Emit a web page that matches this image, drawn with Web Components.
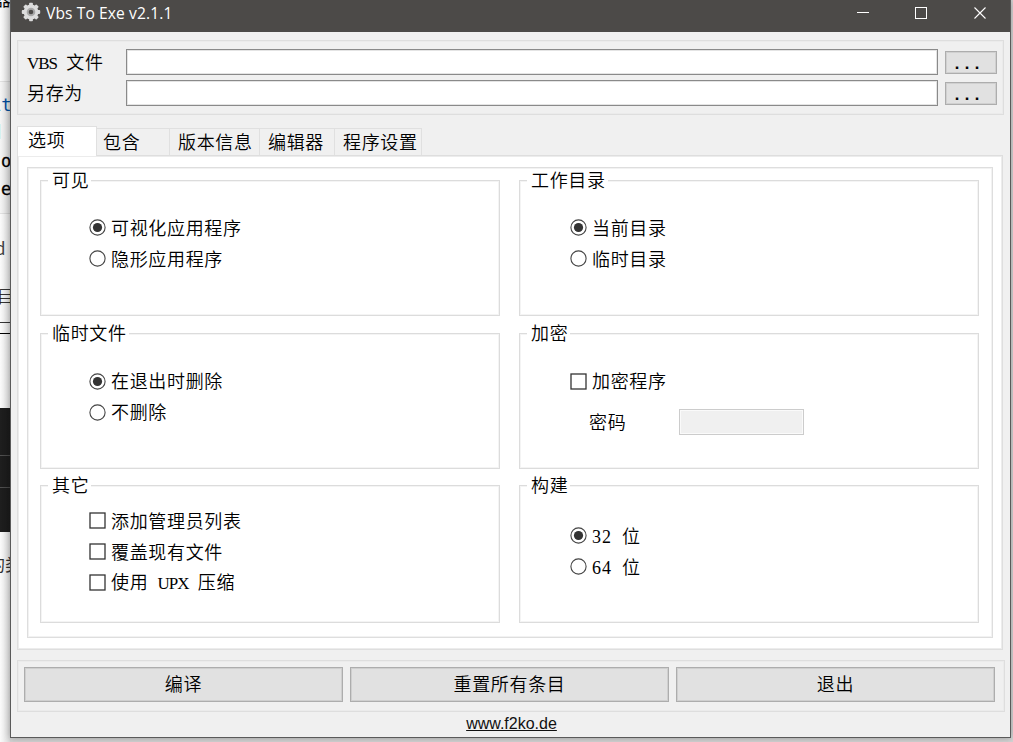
<!DOCTYPE html>
<html lang="zh-CN">
<head>
    <meta charset="UTF-8">
    <meta name="viewport" content="width=device-width, initial-scale=1.0">
    <title>Vbs To Exe v2.1.1</title>
    <style>
        html, body {
            margin: 0;
            height: 100%;
            overflow: hidden;
        }

        body {
            position: relative;
            width: 1013px;
            height: 742px;
            background: #fff;
            color: #000;
            font: 350 18px/24px "Noto Sans CJK SC", sans-serif;
            letter-spacing: 0.67px;
        }

        app-window {
            margin-left: 10px;
        }

        .lat {
            font: 17px/20px "Liberation Serif", serif;
            letter-spacing: -1px;
            word-spacing: 6px;
            white-space: pre;
        }

        .num {
            font: 18px/20px "Liberation Serif", serif;
            letter-spacing: 1px;
            word-spacing: 4.5px;
            white-space: pre;
        }
    </style>
</head>
<body>
    <desk-backdrop></desk-backdrop>
    <app-window caption="Vbs To Exe v2.1.1">
        <file-panel>
            <file-row><span class="lat">VBS </span>文件</file-row>
            <file-row>另存为</file-row>
        </file-panel>
        <tab-strip>
            <tab-item active style="--w: 80px; --pad: 11px">选项</tab-item>
            <tab-item style="--w: 73px; --pad: 6px">包含</tab-item>
            <tab-item style="--w: 90px; --pad: 8px">版本信息</tab-item>
            <tab-item style="--w: 75px; --pad: 8px">编辑器</tab-item>
            <tab-item style="--w: 87px; --pad: 8px">程序设置</tab-item>
        </tab-strip>
        <tab-page>
            <group-box caption="可见" style="--top: 23px">
                <option-item type="radio" checked>可视化应用程序</option-item>
                <option-item type="radio">隐形应用程序</option-item>
            </group-box>
            <group-box caption="工作目录" style="--top: 23px; --left: 50px">
                <option-item type="radio" checked>当前目录</option-item>
                <option-item type="radio">临时目录</option-item>
            </group-box>
            <group-box caption="临时文件" style="--top: 24px">
                <option-item type="radio" checked>在退出时删除</option-item>
                <option-item type="radio">不删除</option-item>
            </group-box>
            <group-box caption="加密" style="--top: 24px; --left: 50px">
                <option-item type="check">加密程序</option-item>
                <password-row>密码</password-row>
            </group-box>
            <group-box caption="其它" style="--top: 11px">
                <option-item type="check">添加管理员列表</option-item>
                <option-item type="check">覆盖现有文件</option-item>
                <option-item type="check">使用<span class="lat"> UPX </span>压缩</option-item>
            </group-box>
            <group-box caption="构建" style="--top: 26px; --left: 50px">
                <option-item type="radio" checked><span class="num">32 </span>位</option-item>
                <option-item type="radio"><span class="num">64 </span>位</option-item>
            </group-box>
        </tab-page>
        <button-bar>
            <push-button>编译</push-button>
            <push-button>重置所有条目</push-button>
            <push-button>退出</push-button>
        </button-bar>
        <site-link>www.f2ko.de</site-link>
    </app-window>

    <script>
        // Small helper: attach an open shadow root and fill it
        function define(name, html) {
            customElements.define(name, class extends HTMLElement {
                constructor() {
                    super();
                    const tpl = document.createElement('template');
                    tpl.innerHTML = html;
                    this.attachShadow({ mode: 'open' }).appendChild(tpl.content.cloneNode(true));
                }

                connectedCallback() {
                    const cap = this.shadowRoot.querySelector('.caption');
                    if (cap) cap.textContent = this.getAttribute('caption');
                }
            });
        }

        // Slice of the page that is visible behind the window
        define('desk-backdrop', `
            <style>
                :host {
                    position: absolute;
                    inset: 0;
                    z-index: -1;
                    overflow: hidden;
                    background: #d4d4d4;
                }
                .strip { position: absolute; left: 0; top: 0; width: 10px; height: 742px; background: #fbfbfb; overflow: hidden; }
                .code { position: absolute; top: 81px; width: 10px; height: 131px; background: #f5f5f5; border: solid #e2e2e2; border-width: 1px 0; }
                .dark { position: absolute; top: 408px; width: 10px; height: 124px; background: #1e1e1e; }
                .dark::before { content: ""; display: block; position: relative; top: 47px; height: 31px; border: solid #505050; border-width: 1px 0; }
                .mark { position: absolute; top: 124px; width: 1px; height: 15px; background: #d5f3f2; }
                .shade { position: absolute; inset: 0; background: linear-gradient(to right, transparent, rgba(0, 0, 0, .13)); }
                span { position: absolute; font: 17px/20px "Noto Sans CJK SC", sans-serif; letter-spacing: 0; white-space: nowrap; }
                .mono { font-family: "DejaVu Sans Mono", monospace; }
            </style>
            <div class="strip">
                <div class="code"></div>
                <div class="mark"></div>
                <div class="dark"></div>
                <span style="left: -6px; top: -11px">器</span>
                <span class="mono" style="left: -9px; top: 95px; color: #0451a5">it</span>
                <span class="mono" style="left: 1px; top: 151px; -webkit-text-stroke: .3px">o</span>
                <span class="mono" style="left: 1px; top: 179px; -webkit-text-stroke: .3px">e</span>
                <span style="left: -5px; top: 238px; color: #444">d</span>
                <span style="left: -3px; top: 286px; font-weight: 300">目</span>
                <span style="left: -4px; top: 317px; font-weight: 300">二</span>
                <span style="left: -12px; top: 554px; color: #333">的类</span>
                <div class="shade"></div>
            </div>
        `);

        define('app-window', `
            <style>
                :host {
                    display: flex;
                    flex-direction: column;
                    box-sizing: border-box;
                    width: 1001px;
                    height: 738px;
                    border: 1px solid #5a5a5a;
                    border-top: 0;
                    background: #f0f0f0;
                    box-shadow: 0 0 7px rgba(0, 0, 0, .3);
                }
                header {
                    display: flex;
                    align-items: flex-start;
                    flex: none;
                    height: 32px;
                    background: #4c4a48;
                    color: #fff;
                }
                .gear { margin: 2px 0 0 10px; }
                .caption { margin: 1px auto 0 5px; font: 15.6px/24px "Open Sans", sans-serif; letter-spacing: 0.1px; }
                .ctl { margin: 6px 1px 0 0; }
                main { display: flex; flex-direction: column; padding: 8px 6px 0 6px; }
            </style>
            <header>
                <svg class="gear" width="20" height="20" viewBox="-10 -10 20 20">
                    <g fill="#dcdcdc">
                        <circle r="7.4"/>
                        <g><rect x="-1.9" y="-9.2" width="3.8" height="18.4" rx=".8"/><rect x="-9.2" y="-1.9" width="18.4" height="3.8" rx=".8"/></g>
                        <g transform="rotate(45)"><rect x="-1.9" y="-9.2" width="3.8" height="18.4" rx=".8"/><rect x="-9.2" y="-1.9" width="18.4" height="3.8" rx=".8"/></g>
                    </g>
                    <circle r="4.3" fill="#a8a8a8"/>
                    <circle r="2.3" fill="#4c4a48"/>
                </svg>
                <span class="caption"></span>
                <svg class="ctl" width="152" height="14" fill="none" stroke="#fff">
                    <path d="M0 6.5h12"/>
                    <rect x="58.5" y="1.5" width="11" height="11"/>
                    <path d="M117.5 1.5l11 11M128.5 1.5l-11 11" stroke-width="1.1"/>
                </svg>
            </header>
            <main><slot></slot></main>
        `);

        define('file-panel', `
            <style>
                :host {
                    display: flex;
                    flex-direction: column;
                    gap: 5px;
                    box-sizing: border-box;
                    width: 987px;
                    height: 75px;
                    padding: 8px 7px 0 9px;
                    border: 1px solid #dedede;
                    box-shadow: inset 0 0 0 1px #ebebeb;
                }
            </style>
            <slot></slot>
        `);

        define('file-row', `
            <style>
                :host { display: flex; align-items: center; height: 26px; }
                .label { flex: none; width: 99px; padding-bottom: 2px; white-space: nowrap; }
                .field { flex: none; box-sizing: border-box; width: 812px; height: 26px; background: #fff; border: 1px solid #8a8a8a; box-shadow: inset 0 0 0 1px #e4e4e4; }
                .browse {
                    flex: none;
                    box-sizing: border-box;
                    width: 52px;
                    height: 23px;
                    margin-left: 7px;
                    border: 1px solid #adadad;
                    box-shadow: inset 0 0 0 1px #d0d0d0;
                    background: #e1e1e1;
                    font: bold 16.7px/26px "Liberation Mono", monospace;
                    letter-spacing: 0;
                    padding-left: 6px;
                }
            </style>
            <span class="label"><slot></slot></span>
            <div class="field"></div>
            <div class="browse">...</div>
        `);

        define('tab-strip', `
            <style>
                :host { display: flex; align-items: flex-end; height: 30px; margin-top: 11px; position: relative; z-index: 1; margin-bottom: -1px; }
            </style>
            <slot></slot>
        `);

        define('tab-item', `
            <style>
                :host {
                    box-sizing: border-box;
                    width: var(--w);
                    height: 27px;
                    padding-left: var(--pad);
                    border: solid #e0e0e0;
                    border-width: 1px 1px 0 0;
                    margin-bottom: 1px;
                    line-height: 25px;
                    white-space: nowrap;
                }
                :host([active]) { height: 30px; margin-bottom: 0; padding-left: calc(var(--pad) - 1px); border-left-width: 1px; background: #fff; }
            </style>
            <slot></slot>
        `);

        define('tab-page', `
            <style>
                :host {
                    display: block;
                    box-sizing: border-box;
                    width: 986px;
                    height: 495px;
                    padding: 11px 9px;
                    border: 1px solid #dedede;
                    box-shadow: inset 0 0 0 1px #ececec;
                    background: #fff;
                }
                .inner {
                    display: grid;
                    grid-template-columns: 460px 460px;
                    grid-template-rows: 136px 136px 138px;
                    row-gap: 16.5px;
                    column-gap: 19px;
                    box-sizing: border-box;
                    width: 966px;
                    height: 471px;
                    padding: 12px 10px 0 12px;
                    border: 1px solid #dedede;
                    box-shadow: inset 0 0 0 1px #f2f2f2;
                }
            </style>
            <div class="inner"><slot></slot></div>
        `);

        define('group-box', `
            <style>
                :host {
                    display: block;
                    box-sizing: border-box;
                    border: 1px solid #dcdcdc;
                    box-shadow: inset 0 0 0 1px #f4f4f4;
                }
                .caption { display: block; width: max-content; height: 20px; line-height: 20px; margin: -12px 0 0 7px; padding: 0 2px 0 4px; background: #fff; }
                .body { display: flex; flex-direction: column; padding: var(--top) 0 0 var(--left, 48px); }
            </style>
            <span class="caption"></span>
            <div class="body"><slot></slot></div>
        `);

        customElements.define('option-item', class extends HTMLElement {
            connectedCallback() {
                if (this.shadowRoot) return;
                const radio = this.getAttribute('type') === 'radio';
                const dot = this.hasAttribute('checked') ? '<circle cx="8.5" cy="8.5" r="4.6" fill="#333"/>' : '';
                const mark = radio
                    ? `<circle cx="8.5" cy="8.5" r="7.6" fill="#fff" stroke="#444" stroke-width="1.1"/>${dot}`
                    : '<rect x="1" y="1" width="15" height="15" fill="#fff" stroke="#333" stroke-width="1.3"/>';
                this.attachShadow({ mode: 'open' }).innerHTML = `
                    <style>
                        :host { display: flex; align-items: center; height: 31px; white-space: nowrap; }
                        svg { flex: none; margin-right: 5px; }
                        span { padding-bottom: 2px; }
                    </style>
                    <svg width="17" height="17">${mark}</svg>
                    <span><slot></slot></span>
                `;
            }
        });

        define('password-row', `
            <style>
                :host { display: flex; align-items: center; height: 26px; margin: 12px 0 0 19px; }
                .label { width: 90px; padding-bottom: 2px; }
                .field { box-sizing: border-box; width: 125px; height: 26px; background: #f0f0f0; border: 1px solid #ccc; box-shadow: inset 0 0 0 1px #fafafa; }
            </style>
            <span class="label"><slot></slot></span>
            <div class="field"></div>
        `);

        define('button-bar', `
            <style>
                :host {
                    display: flex;
                    gap: 7px;
                    box-sizing: border-box;
                    width: 988px;
                    height: 52px;
                    margin-top: 10px;
                    padding: 6px;
                    border: 1px solid #dedede;
                    box-shadow: inset 0 0 0 1px #ebebeb;
                }
            </style>
            <slot></slot>
        `);

        define('push-button', `
            <style>
                :host {
                    box-sizing: border-box;
                    width: 319px;
                    height: 35px;
                    border: 1px solid #adadad;
                    box-shadow: inset 0 0 0 1px #cfcfcf;
                    background: #e1e1e1;
                    line-height: 31px;
                    text-align: center;
                }
            </style>
            <slot></slot>
        `);

        define('site-link', `
            <style>
                :host {
                    align-self: center;
                    margin: 2px 0 0 2px;
                    font: 16px/20px "Liberation Sans", sans-serif;
                    letter-spacing: 0;
                    color: #111;
                    text-decoration: underline;
                }
            </style>
            <slot></slot>
        `);
    </script>
</body>
</html>
